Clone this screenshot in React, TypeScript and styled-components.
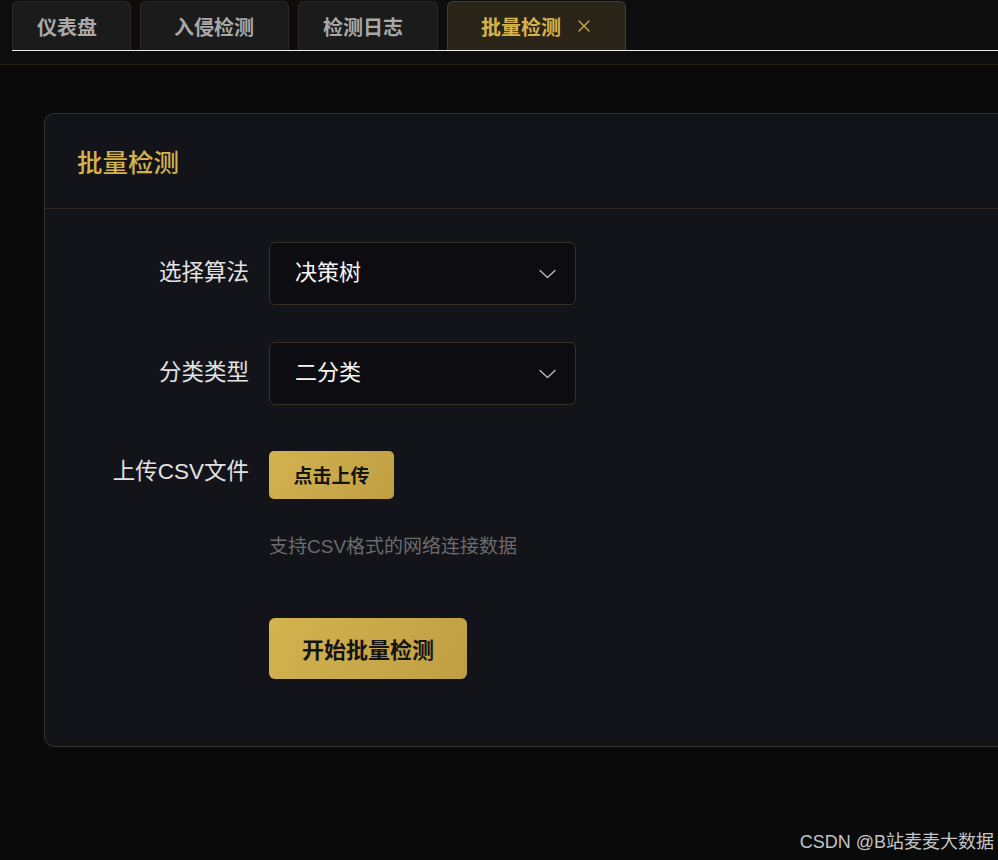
import React from "react";
import styled, { createGlobalStyle } from "styled-components";

const GlobalStyle = createGlobalStyle`
  html, body {
    margin: 0;
    padding: 0;
    background: #0a0a0a;
    overflow: hidden;
  }
  body {
    font-family: "Liberation Sans", "Noto Sans CJK SC", sans-serif;
  }
  * { box-sizing: border-box; }
`;

const Page = styled.div`
  width: 998px;
  height: 860px;
  position: relative;
  background: #0a0a0a;
  overflow: hidden;
`;

const TabBar = styled.div`
  height: 65px;
  padding: 1px 0 0 12px;
  background: #0d0d0d;
  border-bottom: 1px solid #272115;
`;

const TabList = styled.div`
  display: flex;
  gap: 9px;
  height: 50px;
  border-bottom: 1px solid #ececec;
`;

const Tab = styled.div<{ $active?: boolean; $pl: number; $pr: number }>`
  height: 49px;
  display: flex;
  align-items: center;
  padding: 0 ${(p) => p.$pr}px 0 ${(p) => p.$pl}px;
  background: ${(p) => (p.$active ? "#2b2418" : "#1b1b1c")};
  border: 1px solid ${(p) => (p.$active ? "#4a3f22" : "#2c281f")};
  border-bottom: none;
  border-radius: 6px 6px 0 0;
  color: ${(p) => (p.$active ? "#d6b44c" : "#a9a9a9")};
  font-size: 20px;
  font-weight: 700;
  white-space: nowrap;
`;

const CloseIcon = styled.svg`
  margin-left: 17px;
  width: 12px;
  height: 12px;
`;

const Main = styled.div`
  padding: 48px 0 0 44px;
`;

const Card = styled.div`
  width: 1000px;
  background: #131419;
  border: 1px solid #37312a;
  border-radius: 10px;
`;

const CardHeader = styled.div`
  height: 95px;
  display: flex;
  align-items: center;
  padding: 0 0 2px 32px;
  border-bottom: 1px solid #302a22;
`;

const CardTitle = styled.div`
  color: #d4b34c;
  font-size: 25.5px;
  font-weight: 500;
`;

const CardBody = styled.div`
  padding: 33px 0 67px 0;
  display: flex;
  flex-direction: column;
`;

const FormRow = styled.div<{ $mt?: number }>`
  display: grid;
  grid-template-columns: 224px 1fr;
  margin-top: ${(p) => p.$mt ?? 0}px;
`;

const Label = styled.div<{ $h: number }>`
  padding-right: 20px;
  text-align: right;
  color: #e2e2e2;
  font-size: 22.5px;
  line-height: ${(p) => p.$h}px;
  white-space: nowrap;
`;

const Control = styled.div`
  display: flex;
  flex-direction: column;
  align-items: flex-start;
`;

const Select = styled.div`
  width: 307px;
  height: 63px;
  display: flex;
  align-items: center;
  justify-content: space-between;
  padding: 0 19px 0 25px;
  background: #0d0d11;
  border: 1px solid #352f24;
  border-radius: 6px;
`;

const SelectValue = styled.span`
  color: #f6f6f6;
  font-size: 22px;
  font-weight: 400;
  line-height: 1;
  padding-bottom: 2px;
`;

const Chevron = styled.svg`
  width: 17px;
  height: 10px;
`;

const GoldButton = styled.button<{ $w: number; $h: number; $fs: number; $r: number }>`
  width: ${(p) => p.$w}px;
  height: ${(p) => p.$h}px;
  border: none;
  border-radius: ${(p) => p.$r}px;
  background: linear-gradient(120deg, #d3b24f 0%, #bf9f43 100%);
  color: #141414;
  font-family: inherit;
  font-size: ${(p) => p.$fs}px;
  font-weight: 700;
  padding: 0 0 2px 0;
  cursor: pointer;
`;

const Hint = styled.div`
  margin-top: 34px;
  color: #6b6b6e;
  font-size: 19px;
  line-height: 28px;
`;

const Watermark = styled.div`
  position: absolute;
  right: 4px;
  bottom: 7px;
  color: #c4c4c4;
  font-size: 18px;
  line-height: 22px;
`;

const ChevronDown = () => (
  <Chevron viewBox="0 0 17 10" fill="none">
    <path d="M1 1.5 L8.5 8.5 L16 1.5" stroke="#b8b8b8" strokeWidth="1.4" strokeLinecap="round" strokeLinejoin="round" />
  </Chevron>
);

export default function App() {
  return (
    <>
      <GlobalStyle />
      <Page>
        <TabBar>
          <TabList>
            <Tab $pl={24} $pr={33}>仪表盘</Tab>
            <Tab $pl={33} $pr={34}>入侵检测</Tab>
            <Tab $pl={24} $pr={34}>检测日志</Tab>
            <Tab $active $pl={33} $pr={35}>
              批量检测
              <CloseIcon viewBox="0 0 12 12" fill="none">
                <path d="M1 1 L11 11 M11 1 L1 11" stroke="#d6b44c" strokeWidth="1.2" strokeLinecap="round" />
              </CloseIcon>
            </Tab>
          </TabList>
        </TabBar>
        <Main>
          <Card>
            <CardHeader>
              <CardTitle>批量检测</CardTitle>
            </CardHeader>
            <CardBody>
              <FormRow>
                <Label $h={61}>选择算法</Label>
                <Control>
                  <Select>
                    <SelectValue>决策树</SelectValue>
                    <ChevronDown />
                  </Select>
                </Control>
              </FormRow>
              <FormRow $mt={37}>
                <Label $h={61}>分类类型</Label>
                <Control>
                  <Select>
                    <SelectValue>二分类</SelectValue>
                    <ChevronDown />
                  </Select>
                </Control>
              </FormRow>
              <FormRow $mt={46}>
                <Label $h={42}>上传CSV文件</Label>
                <Control>
                  <GoldButton $w={125} $h={48} $fs={19} $r={5}>点击上传</GoldButton>
                  <Hint>支持CSV格式的网络连接数据</Hint>
                </Control>
              </FormRow>
              <FormRow $mt={57}>
                <div />
                <Control>
                  <GoldButton $w={198} $h={61} $fs={22} $r={6}>开始批量检测</GoldButton>
                </Control>
              </FormRow>
            </CardBody>
          </Card>
        </Main>
        <Watermark>CSDN @B站麦麦大数据</Watermark>
      </Page>
    </>
  );
}
